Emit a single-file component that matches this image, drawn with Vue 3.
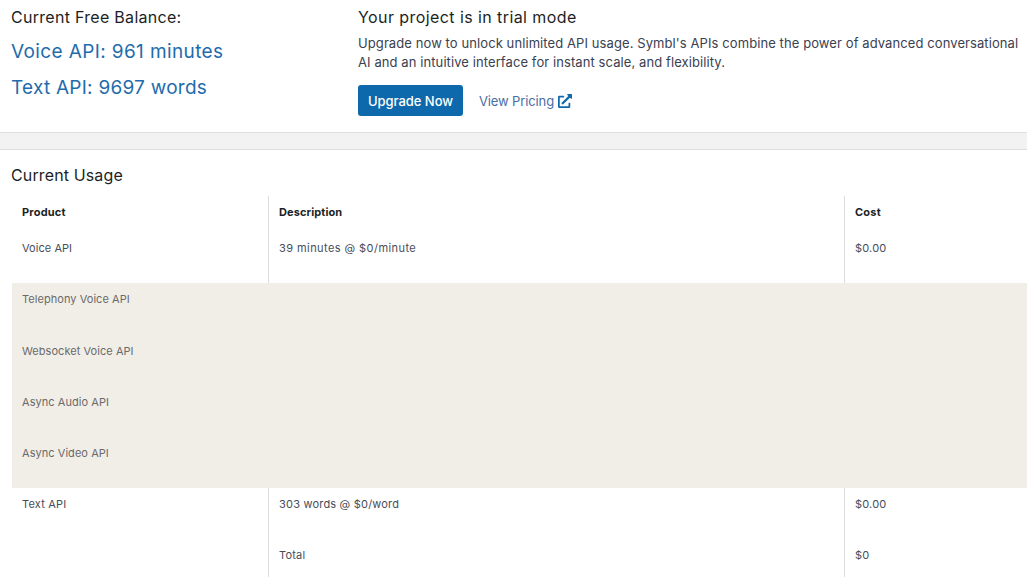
<script setup>
const nested = ['Telephony Voice API', 'Websocket Voice API', 'Async Audio API', 'Async Video API']
</script>

<template>
  <div class="page">
    <section class="top">
      <div class="balance">
        <h2 class="balance-title">Current Free Balance:</h2>
        <p class="balance-line first">Voice API: 961 minutes</p>
        <p class="balance-line second">Text API: 9697 words</p>
      </div>
      <div class="trial">
        <h2 class="trial-title">Your project is in trial mode</h2>
        <p class="trial-text">Upgrade now to unlock unlimited API usage. Symbl's APIs combine the power of advanced conversational AI and an intuitive interface for instant scale, and flexibility.</p>
        <div class="actions">
          <button class="upgrade">Upgrade Now</button>
          <a class="pricing">View Pricing
            <svg class="ext" viewBox="0 0 512 512" width="14" height="14"><path fill="#1069ad" d="M432 320h-32a16 16 0 0 0-16 16v112H64V128h144a16 16 0 0 0 16-16V80a16 16 0 0 0-16-16H48a48 48 0 0 0-48 48v352a48 48 0 0 0 48 48h352a48 48 0 0 0 48-48V336a16 16 0 0 0-16-16zM488 0H360c-21.4 0-32 25.9-17 41l35.7 35.7L135 320.4a24 24 0 0 0 0 34l22.6 22.6a24 24 0 0 0 34 0l243.6-243.7L471 169c15 15 41 4.5 41-17V24a24 24 0 0 0-24-24z"/></svg>
          </a>
        </div>
      </div>
    </section>
    <div class="band"></div>
    <section class="usage">
      <h2 class="usage-title">Current Usage</h2>
      <div class="table">
        <div class="row head">
          <div class="c1">Product</div><div class="c2">Description</div><div class="c3">Cost</div>
        </div>
        <div class="row main">
          <div class="c1">Voice API</div><div class="c2 wide">39 minutes @ $0/minute</div><div class="c3">$0.00</div>
        </div>
        <div class="nested">
          <div v-for="n in nested" :key="n" class="nested-row">{{ n }}</div>
        </div>
        <div class="row body">
          <div class="c1">Text API</div><div class="c2">303 words @ $0/word</div><div class="c3">$0.00</div>
        </div>
        <div class="row body">
          <div class="c1"></div><div class="c2">Total</div><div class="c3">$0</div>
        </div>
      </div>
    </section>
  </div>
</template>

<style>
html, body { margin: 0; background: #fff; overflow: hidden; }
</style>

<style scoped>
.page {
  width: 1027px;
  height: 577px;
  overflow: hidden;
  font-family: Inter, "Open Sans", sans-serif;
  color: #2c3440;
}
h2, p { margin: 0; font-weight: 400; }
.top { display: flex; height: 132px; box-sizing: border-box; }
.balance { width: 358px; box-sizing: border-box; padding: 8px 0 0 11px; }
.balance-title { font-size: 16px; line-height: 18px; color: #1c1f26; letter-spacing: 0.29px; }
.balance-line { font-size: 19px; line-height: 24px; color: #1f6cad; letter-spacing: 0.38px; }
.balance-line.first { margin-top: 14px; }
.balance-line.second { margin-top: 12px; letter-spacing: 0.25px; }
.trial { flex: 1; padding-top: 8px; }
.trial-title { font-size: 16px; line-height: 18px; color: #1c1f26; letter-spacing: 0.42px; }
.trial-text { font-size: 13px; line-height: 19px; width: 664px; margin-top: 8px; letter-spacing: 0.09px; color: #3a4150; }
.actions { display: flex; align-items: center; margin-top: 13px; }
.upgrade {
  width: 105px; height: 31px; padding: 0; border: 0; border-radius: 3px;
  background: #0d69ab; color: #fff; font: inherit; font-size: 13px; letter-spacing: -0.05px; font-weight: 500;
}
.pricing { display: flex; align-items: center; gap: 4px; margin-left: 16px; font-size: 13px; color: #4a6ea5; letter-spacing: -0.13px; }
.ext { flex: none; }
.band { height: 16px; background: #f2f2f2; border-top: 1px solid #dedede; border-bottom: 1px solid #dedede; }
.usage { padding-left: 12px; }
.usage-title { font-size: 16px; line-height: 18px; color: #1c1f26; letter-spacing: 0.13px; margin: 16px 0 0 -1px; }
.table { margin-top: 12px; font-size: 11px; letter-spacing: 0.2px; color: #474d5a; }
.row { display: grid; grid-template-columns: 256px 576px 1fr; }
.row > div { padding: 10px 0 0 10px; line-height: 13px; box-sizing: border-box; }
.row > .c2, .row > .c3 { border-left: 1px solid #dcdcdc; }
.c2.wide { letter-spacing: 0.43px; }
.head { height: 36px; font-weight: 700; color: #1c1f26; }
.head .c2 { letter-spacing: 0.1px; }
.main, .body { height: 51px; }
.main .c1 { letter-spacing: 0.05px; }
.nested { background: #f1eee8; height: 205px; color: #6a6a6a; padding-top: 3px; box-sizing: border-box; letter-spacing: 0.05px; }
.nested-row { height: 51px; padding: 7px 0 0 10px; line-height: 13px; box-sizing: border-box; }
.nested-row:first-child { height: 52px; }
</style>
